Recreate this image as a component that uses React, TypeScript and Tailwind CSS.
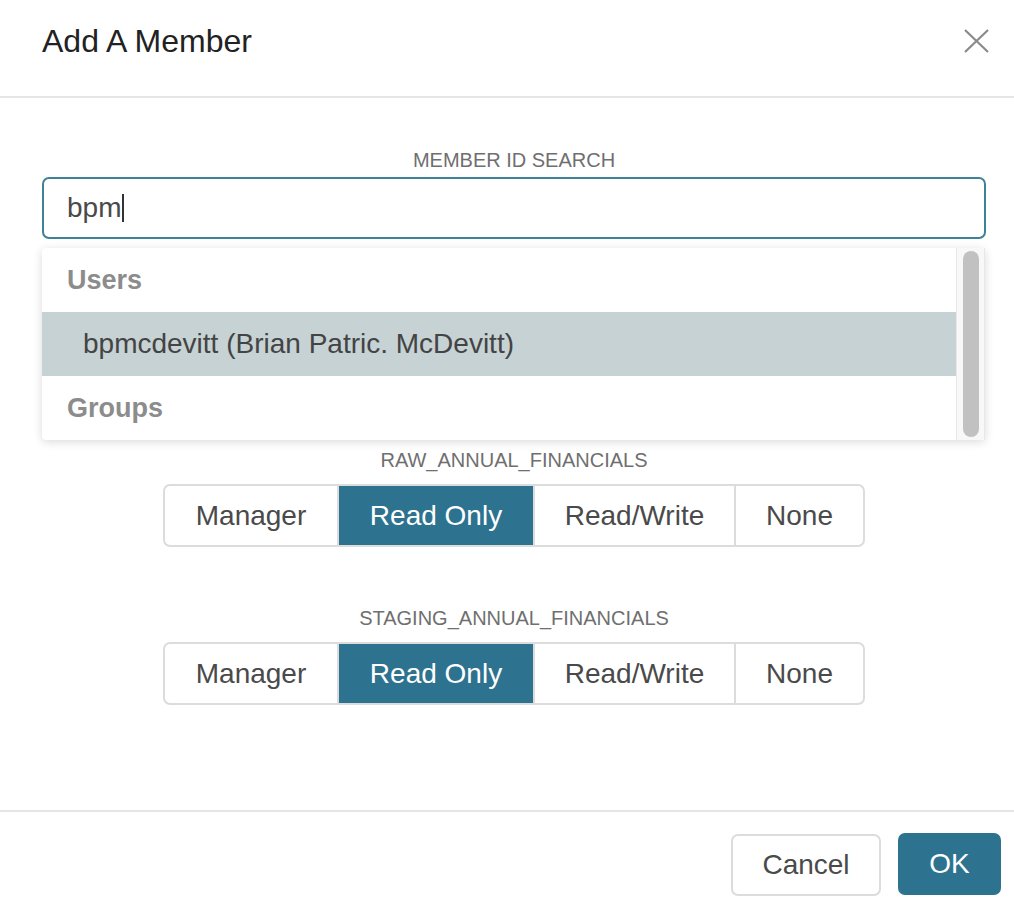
const font = { fontFamily: '"Liberation Sans", Arial, Helvetica, sans-serif' };

const options = ["Manager", "Read Only", "Read/Write", "None"];
const widths = ["w-[172px]", "w-[196px]", "w-[201px]", "w-[129px]"];

function RoleGroup({ label, selected }: { label: string; selected: string }) {
  return (
    <div className="flex flex-col items-center">
      <div className="text-[20px] leading-[24px] text-[#6f6f6f]">{label}</div>
      <div className="mt-[12px] flex h-[63px] overflow-hidden rounded-[7px] border-2 border-[#dcdcdc]">
        {options.map((o, i) => (
          <div
            key={o}
            className={`flex items-center justify-center text-[28px] ${widths[i]} ${
              i > 0 ? "border-l-2 border-[#dcdcdc]" : ""
            } ${o === selected ? "-my-[2px] bg-[#2d7390] text-white border-[#2d7390]" : "text-[#4a4a4a]"}`}
          >
            {o}
          </div>
        ))}
      </div>
    </div>
  );
}

export default function App() {
  return (
    <div className="flex h-[910px] w-[1014px] flex-col bg-white" style={font}>
      {/* Header */}
      <header className="flex h-[98px] shrink-0 items-start justify-between border-b-2 border-[#e6e6e6] pl-[42px] pr-[25px] pt-[25px]">
        <h1 className="text-[32px] leading-[32px] text-[#222]">Add A Member</h1>
        <button className="mt-[4px]" aria-label="Close">
          <svg width="25" height="24" viewBox="0 0 25 24" fill="none" stroke="#8a8a8a" strokeWidth="2.2">
            <path d="M1 1 L24 23 M24 1 L1 23" />
          </svg>
        </button>
      </header>

      {/* Body */}
      <main className="relative flex-1 pl-[42px] pr-[28px]">
        <div className="mt-[50px] text-center text-[20px] leading-[24px] text-[#6f6f6f]">MEMBER ID SEARCH</div>
        <div className="mt-[5px] flex h-[62px] items-center rounded-[7px] border-2 border-[#3f8196] pl-[23px]">
          <span className="text-[28px] text-[#4a4a4a]">bpm</span>
          <span className="ml-[1px] h-[28px] w-[2px] bg-[#333]" />
        </div>

        <div className="mt-[209px]">
          <RoleGroup label="RAW_ANNUAL_FINANCIALS" selected="Read Only" />
        </div>
        <div className="mt-[59px]">
          <RoleGroup label="STAGING_ANNUAL_FINANCIALS" selected="Read Only" />
        </div>

        {/* Autocomplete dropdown */}
        <div className="absolute left-[42px] top-[150px] flex h-[192px] w-[943px] rounded-[4px] bg-white shadow-[0_2px_10px_rgba(0,0,0,0.15)]">
          <div className="flex-1">
            <div className="flex h-[64px] items-center pl-[25px] text-[27px] font-bold text-[#8c8c8c]">Users</div>
            <div className="flex h-[64px] items-center bg-[#c6d2d4] pl-[41px] text-[28px] text-[#444]">
              bpmcdevitt (Brian Patric. McDevitt)
            </div>
            <div className="flex h-[64px] items-center pl-[25px] text-[27px] font-bold text-[#8c8c8c]">Groups</div>
          </div>
          <div className="flex w-[29px] justify-center border-x border-[#e8e8e8] bg-[#f8f8f8] py-[3px]">
            <div className="w-[16px] rounded-full bg-[#c1c1c1]" />
          </div>
        </div>
      </main>

      {/* Footer */}
      <footer className="flex h-[100px] shrink-0 items-start justify-end gap-[17px] border-t-2 border-[#e6e6e6] pr-[13px] pt-[21px]">
        <button className="mt-[1px] h-[62px] w-[150px] rounded-[7px] border-2 border-[#dcdcdc] text-[28px] text-[#4a4a4a]">
          Cancel
        </button>
        <button className="h-[62px] w-[103px] rounded-[7px] bg-[#2d7390] text-[28px] text-white">OK</button>
      </footer>
    </div>
  );
}
